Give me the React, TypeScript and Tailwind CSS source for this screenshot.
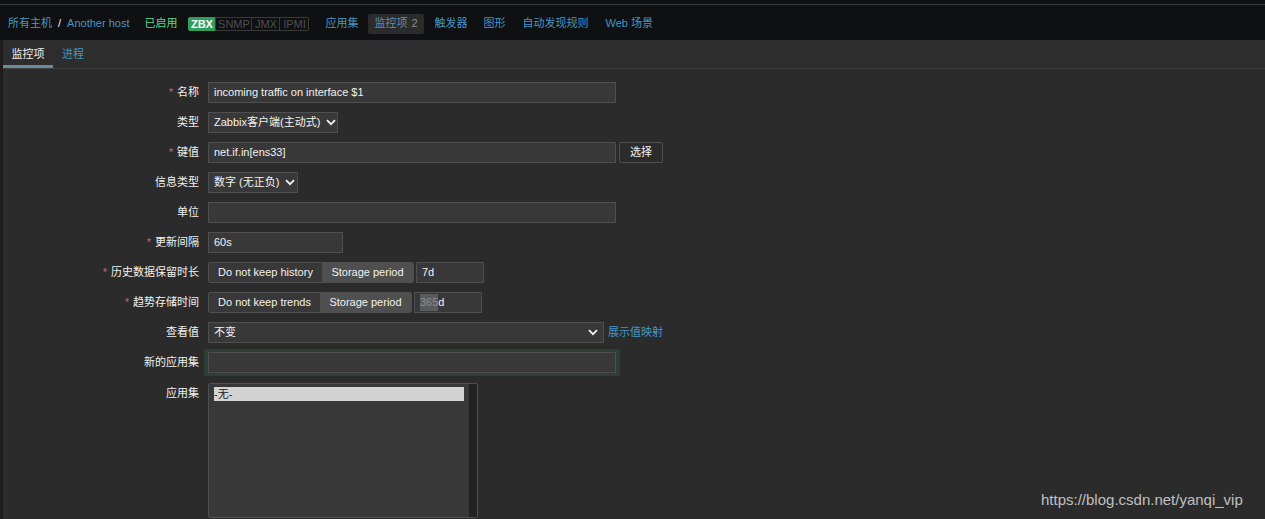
import React from "react";

const FONT = { fontFamily: '"Liberation Sans", Arial, "Noto Sans CJK SC", sans-serif' };

function Chevron() {
  return (
    <svg width="10" height="7" viewBox="0 0 10 7" className="ml-[6px] shrink-0">
      <path d="M1 1.2 L5 5.2 L9 1.2" stroke="#f2f2f2" strokeWidth="1.8" fill="none" />
    </svg>
  );
}

function Label({ text, req }: { text: string; req?: boolean }) {
  return (
    <div className="flex h-[21px] items-center justify-end whitespace-nowrap text-[11px] text-[#f2f2f2]">
      {req && <span className="mr-[4px] text-[#e45959]">*</span>}
      <span>{text}</span>
    </div>
  );
}

const inputCls =
  "flex h-[21px] items-center whitespace-nowrap border border-[#4f4f4f] bg-[#383838] px-[5px] text-[11px] text-[#f2f2f2]";

export default function App() {
  return (
    <div className="relative h-[519px] w-[1265px] overflow-hidden bg-[#2b2b2b]" style={FONT}>
      {/* header */}
      <div className="h-[40px] bg-[#0e1012]">
        <div className="h-[4px]" />
        <div className="h-px bg-[#3a3a3a]" />
        <div className="flex h-[35px] items-center whitespace-nowrap pl-[8px] pt-[2px] text-[11px]">
          <span className="text-[#4796c4]">所有主机</span>
          <span className="mx-[6px] text-[#f2f2f2]">/</span>
          <span className="text-[#4796c4]">Another host</span>
          <span className="ml-[15px] text-[#59db8f]">已启用</span>
          <div className="ml-[11px] flex h-[14px] items-stretch text-[11px] leading-[14px]">
            <span className="flex w-[27px] justify-center rounded-l-[2px] bg-[#2f9f5e] font-bold text-white">ZBX</span>
            <span className="flex w-[37px] justify-center border border-[#3a3a3a] leading-[12px] text-[#4f4f4f]">SNMP</span>
            <span className="flex w-[28px] justify-center border border-l-0 border-[#3a3a3a] leading-[12px] text-[#4f4f4f]">JMX</span>
            <span className="flex w-[29px] justify-center rounded-r-[2px] border border-l-0 border-[#3a3a3a] leading-[12px] text-[#4f4f4f]">IPMI</span>
          </div>
          <span className="ml-[16px] text-[#4796c4]">应用集</span>
          <span className="ml-[10px] flex h-[20px] items-center rounded-[2px] bg-[#2b2b2b] px-[6px]">
            <span className="text-[#5b8eb8]">监控项</span>
            <span className="ml-[4px] text-[#8c8c8c]">2</span>
          </span>
          <span className="ml-[11px] text-[#4796c4]">触发器</span>
          <span className="ml-[16px] text-[#4796c4]">图形</span>
          <span className="ml-[17px] text-[#4796c4]">自动发现规则</span>
          <span className="ml-[17px] text-[#4796c4]">Web 场景</span>
        </div>
      </div>

      {/* body */}
      <div className="flex h-[479px] border-l-[3px] border-[#1e1e1e]">
        <div className="flex-1">
          {/* tabs */}
          <div className="flex h-[29px] border-b border-[#404040] bg-[#2d2d2d] text-[11px]">
            <div className="flex h-full w-[50px] flex-col">
              <div className="flex flex-1 items-center justify-center pt-[3px] text-[#f2f2f2]">监控项</div>
              <div className="h-[3px] bg-[#6f8a96]" />
            </div>
            <div className="ml-[9px] flex h-full items-center text-[#4796c4]">进程</div>
          </div>

          {/* form */}
          <div className="grid grid-cols-[196px_1fr] gap-x-[9px] gap-y-[9px] pt-[13px] text-[11px]">
            <Label text="名称" req />
            <div className={`${inputCls} w-[408px]`}>incoming traffic on interface $1</div>

            <Label text="类型" />
            <div className={`${inputCls} w-[130px]`}>
              <span>Zabbix客户端(主动式)</span>
              <Chevron />
            </div>

            <Label text="键值" req />
            <div className="flex items-center">
              <div className={`${inputCls} w-[408px]`}>net.if.in[ens33]</div>
              <div className="ml-[3px] flex h-[21px] w-[44px] items-center justify-center rounded-[2px] border border-[#4f4f4f] bg-[#2b2b2b] text-[#f2f2f2]">
                选择
              </div>
            </div>

            <Label text="信息类型" />
            <div className={`${inputCls} w-[90px]`}>
              <span>数字 (无正负)</span>
              <Chevron />
            </div>

            <Label text="单位" />
            <div className={`${inputCls} w-[408px]`} />

            <Label text="更新间隔" req />
            <div className={`${inputCls} w-[135px]`}>60s</div>

            <Label text="历史数据保留时长" req />
            <div className="flex items-center">
              <div className="flex h-[21px] overflow-hidden whitespace-nowrap rounded-[2px] border border-[#4f4f4f]">
                <div className="flex w-[113px] items-center justify-center bg-[#383838] text-[#f2f2f2]">Do not keep history</div>
                <div className="flex w-[91px] items-center justify-center bg-[#4f4f4f] text-[#f2f2f2]">Storage period</div>
              </div>
              <div className={`${inputCls} ml-[2px] w-[68px]`}>7d</div>
            </div>

            <Label text="趋势存储时间" req />
            <div className="flex items-center">
              <div className="flex h-[21px] overflow-hidden whitespace-nowrap rounded-[2px] border border-[#4f4f4f]">
                <div className="flex w-[111px] items-center justify-center bg-[#383838] text-[#f2f2f2]">Do not keep trends</div>
                <div className="flex w-[91px] items-center justify-center bg-[#4f4f4f] text-[#f2f2f2]">Storage period</div>
              </div>
              <div className={`${inputCls} ml-[2px] w-[68px]`}>
                <span className="bg-[#5a5a5a] text-[#909090]">365</span>
                <span>d</span>
              </div>
            </div>

            <Label text="查看值" />
            <div className="flex items-center">
              <div className={`${inputCls} w-[396px] justify-between`}>
                <span>不变</span>
                <Chevron />
              </div>
              <span className="ml-[4px] whitespace-nowrap text-[#4796c4]">展示值映射</span>
            </div>

            <div className="-mb-[2px] -mt-[3px] flex h-[27px] items-center justify-end text-[#f2f2f2]">新的应用集</div>
            <div className="-mb-[2px] -ml-[4px] -mt-[3px] h-[27px] w-[416px] rounded-[2px] bg-[#2f3f35] p-[3px_4px]">
              <div className={`${inputCls} w-[408px]`} />
            </div>

            <div className="flex h-[21px] items-center justify-end text-[#f2f2f2]">应用集</div>
            <div className="flex h-[135px] w-[270px] rounded-[2px] border border-[#4f4f4f] bg-[#383838]">
              <div className="flex-1 px-[5px] pt-[3px]">
                <div className="flex h-[14px] items-center bg-[#d3d3d3] text-[11px] leading-[14px] text-[#1a1a1a]">-无-</div>
              </div>
              <div className="w-[8px] bg-[#222222]" />
            </div>
          </div>
        </div>
      </div>

      <div className="pointer-events-none absolute left-[1041px] top-[489px] text-[15px] text-[#c0c0c0]">
        https://blog.csdn.net/yanqi_vip
      </div>
    </div>
  );
}
